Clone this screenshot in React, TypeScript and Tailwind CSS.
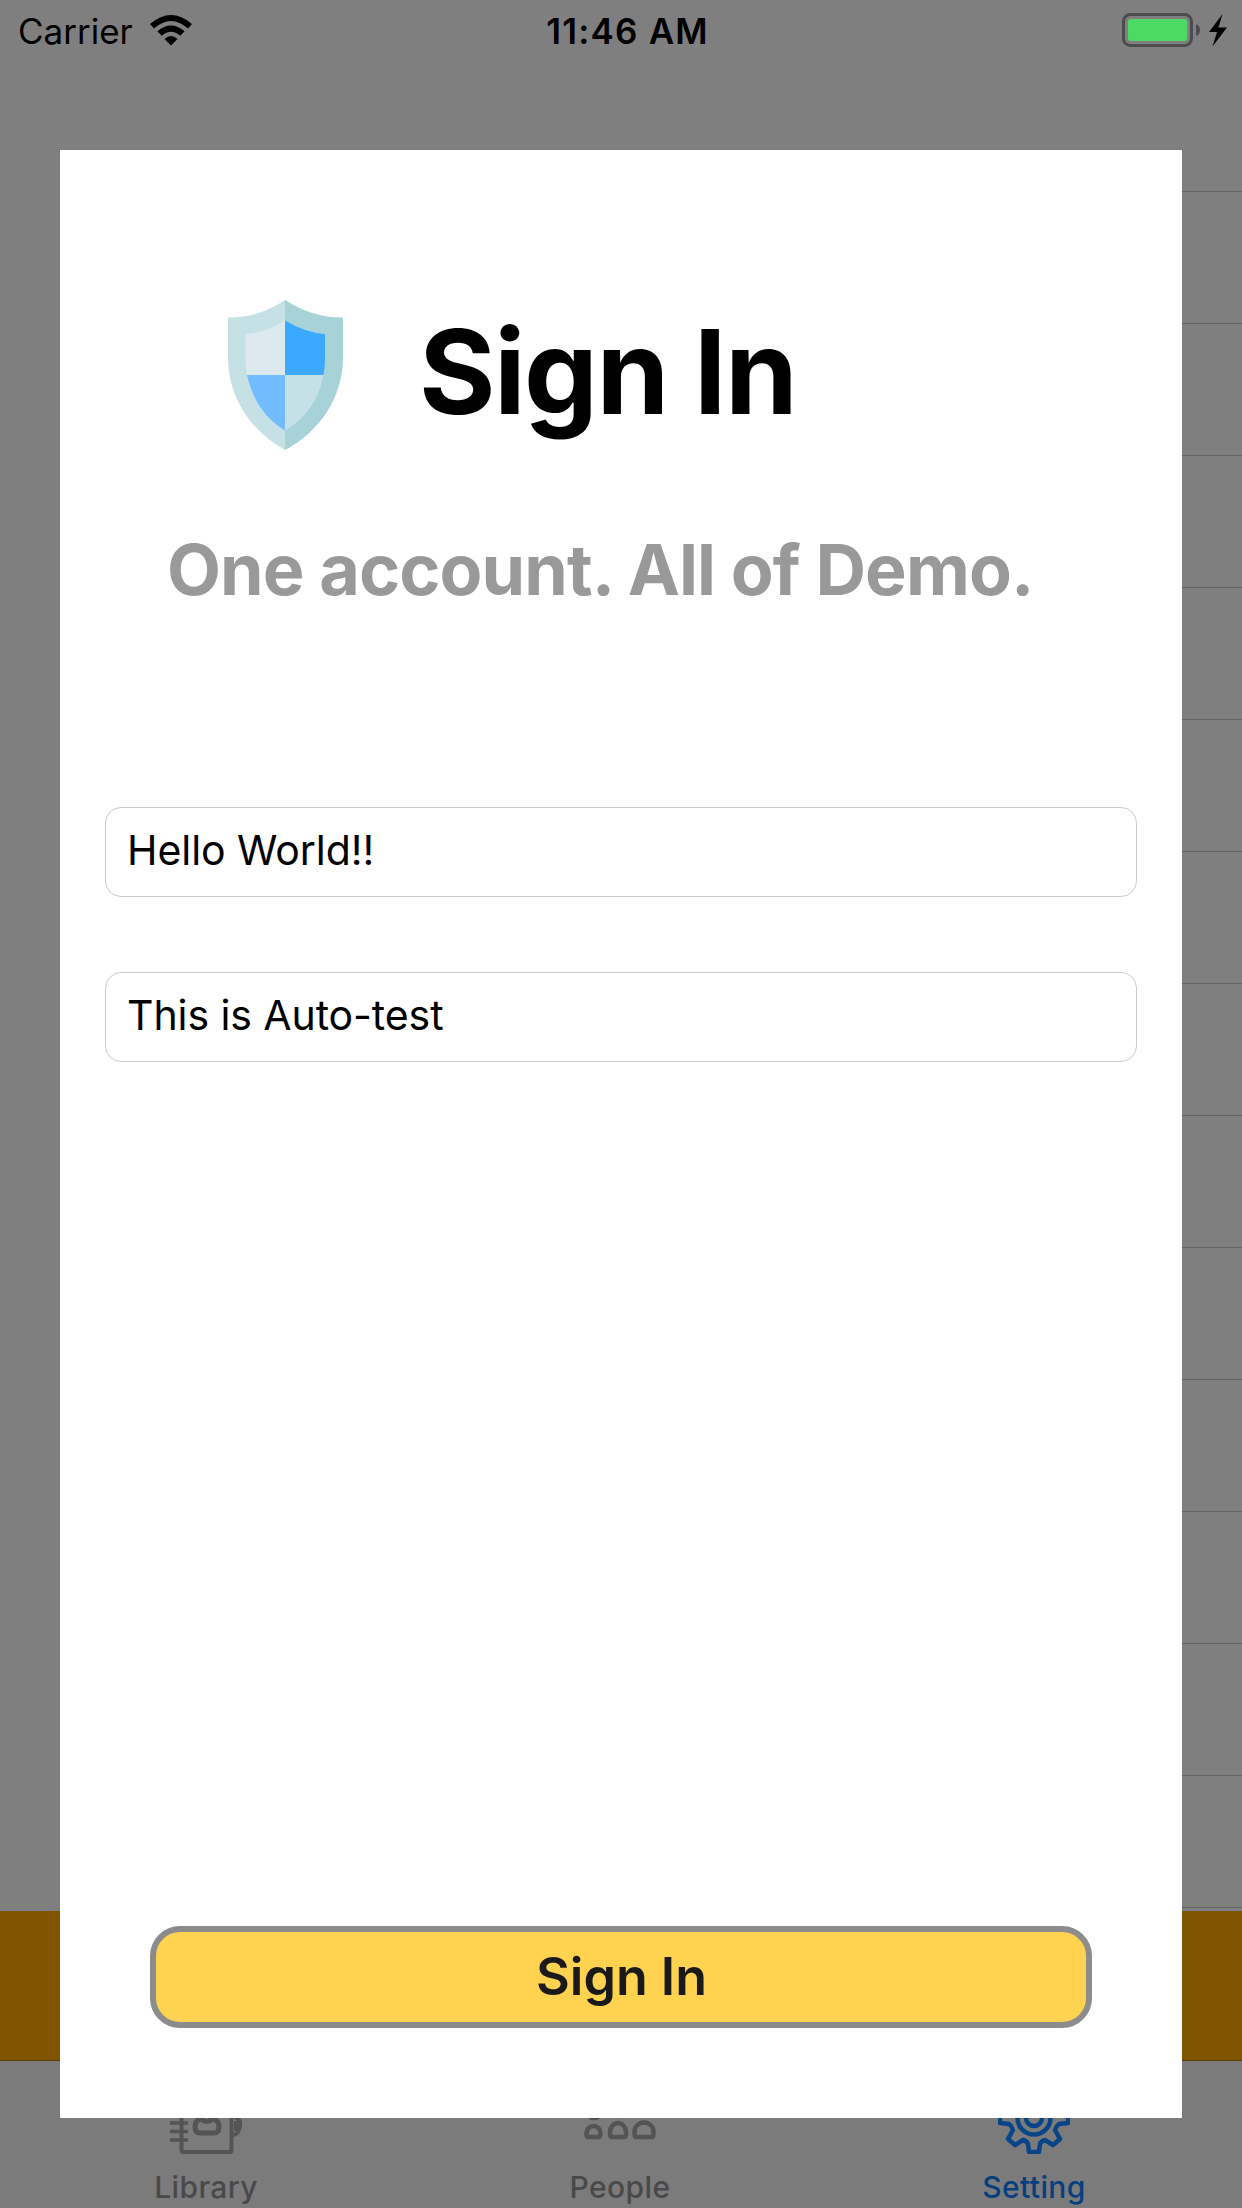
import React from "react";

const rows = Array.from({ length: 14 }, (_, i) => i);

function Wifi() {
  return (
    <svg className="ml-[17px] mt-[15px] h-[31px] w-[42px]" viewBox="0 0 42 31">
      <path d="M0 9Q21 -9 42 9L38 13.5Q21 -1.5 4 13.5Z" />
      <path d="M7.3 16.3Q21 4.5 34.7 16.3L30.2 20.8Q21 12.5 11.8 20.8Z" />
      <path d="M14.5 24Q21 18 27.500 24L21 30.500Z" />
    </svg>
  );
}

function Battery() {
  return (
    <svg className="h-[34px] w-[106px]" viewBox="0 0 106 34">
      <rect x="1.5" y="1.500" width="68" height="31" rx="7" fill="none" stroke="#4c4c4c" strokeWidth="3" />
      <rect x="6" y="6" width="59.300" height="22" rx="3" fill="#4cd964" />
      <path d="M74 11q4 1.500 4 6t-4 6z" fill="#4c4c4c" />
      <path d="M100.500 1L87 19h8l-4.500 14.500L105 14.500h-8.500z" />
    </svg>
  );
}

function Shield() {
  return (
    <svg className="mt-[150px] ml-[168px] h-[150px] w-[115px] shrink-0" viewBox="0 0 115 150">
      <path d="M57 0Q30 18 0 17.500V57C0 96 22 131 57 150Z" fill="#c6e1e5" />
      <path d="M57 0Q85 18 115 17.500V57C115 96 93 131 57 150Z" fill="#a6d2d8" />
      <path d="M57 20.500Q39 32 17.500 34.300V58Q17.500 67 19 75H57Z" fill="#dceaf0" />
      <path d="M57 20.500Q76 32 97 34.300V58Q97 67 95.500 75H57Z" fill="#3ba9ff" />
      <path d="M19 75C25 101 37 118 57 130.500V75Z" fill="#73bbff" />
      <path d="M95.500 75C90 101 78 118 57 130.500V75Z" fill="#c6e1e5" />
    </svg>
  );
}

function LibraryIcon() {
  return (
    <svg className="h-[72px] w-[72px]" viewBox="0 0 72 72" fill="none" stroke="#545454" strokeWidth="4">
      <path d="M11.500 4q0-2 2-2h46q2 0 2 2v64q0 2-2 2h-46q-2 0-2-2z" />
      <path d="M0 14h18M0 23h18M0 32h18M0 41h18M0 49.500h18M0 58h18" strokeWidth="3.500" />
      <path d="M31 37q6 5 12 0 6 1 6 8 0 6-5 6H30q-5 0-5-6 0-7 6-8z" strokeWidth="5" />
      <path d="M62 32l7 6q2 2 1 6l-2 6q-2 3-6 3M66 39v10" />
    </svg>
  );
}

function PeopleIcon() {
  return (
    <svg className="h-[72px] w-[72px]" viewBox="0 0 72 72" fill="none" stroke="#545454" strokeWidth="4.500">
      <circle cx="10" cy="28" r="8" />
      <circle cx="34" cy="26" r="8" />
      <circle cx="60" cy="25" r="8" />
      <path d="M2.500 52v-1a7 7 0 0 1 14 0v1q0 3-2 3h-10q-2 0-2-3zM26 52v-2a8 9 0 0 1 16 0v2q0 3-2 3H28q-2 0-2-3zM50.500 52v-2a9.500 9.500 0 0 1 19 0v2q0 3-2 3h-15q-2 0-2-3z" />
    </svg>
  );
}

function GearIcon() {
  return (
    <svg className="h-[72px] w-[72px]" viewBox="0 0 72 72" fill="none" stroke="#084588" strokeWidth="4.500" strokeLinejoin="round">
      <path d="M31 2H41L42.500 11Q45 13 48 14L55 8L63 16L57 24Q59 27 60 30L70 31V41L61 42Q58 44 57 48L62 57L55 63L47 58Q43 59 42 62L41 70H31L30 62Q29 59 25 58L17 63L10 57L15 48Q14 44 11 42L2 41V31L12 30Q13 27 15 24L9 16L17 8L24 14Q27 13 29.500 11Z" />
      <circle cx="36" cy="36" r="16.500" />
      <circle cx="36" cy="36" r="8" />
    </svg>
  );
}

function Tab({ icon, label, className }: { icon: React.ReactNode; label: string; className: string }) {
  return (
    <div className={`flex flex-1 flex-col items-center pr-[2px] pt-[21px] text-[30px] font-medium leading-[36px] ${className}`}>
      {icon}
      <span className="mt-[15px] tracking-[0.4px]">{label}</span>
    </div>
  );
}

export default function App() {
  return (
    <div className="relative h-[2208px] w-[1242px] overflow-hidden bg-[#7f7f7f] font-['Inter',sans-serif] text-black">
      <div className="flex h-full flex-col">
        <header className="flex h-[60px] shrink-0">
          <div className="flex w-[414px]">
            <span className="ml-[18px] mt-[10px] text-[35px] leading-[42px]">Carrier</span>
            <Wifi />
          </div>
          <div className="mt-[10px] w-[427px] text-center text-[35px] font-semibold leading-[42px] tracking-[1.2px]">11:46 AM</div>
          <div className="ml-auto mr-[14px] mt-[13px]"><Battery /></div>
        </header>
        {rows.map((row) => (
          <div key={row} className="ml-[60px] h-[132px] shrink-0 border-b border-[#646464]" />
        ))}
        <div className="mt-[3px] h-[150px] shrink-0 border-b border-[#593b00] bg-[#7f5500]" />
        <nav className="flex h-[147px] shrink-0 bg-[#7b7b7b]">
          <Tab icon={<LibraryIcon />} label="Library" className="text-[#494949]" />
          <Tab icon={<PeopleIcon />} label="People" className="text-[#494949]" />
          <Tab icon={<GearIcon />} label="Setting" className="text-[#063f80]" />
        </nav>
      </div>

      <main className="absolute left-[60px] top-[150px] flex h-[1968px] w-[1122px] flex-col bg-white">
        <div className="flex">
          <Shield />
          <h1 className="ml-[76px] mt-[149px] whitespace-nowrap text-[117px] font-bold leading-[146px] tracking-[-1.6px]">Sign In</h1>
        </div>
        <p className="ml-[107px] mt-[78px] whitespace-nowrap text-[70px] font-bold leading-[84px] tracking-[-0.9px] text-[#999999]">One account. All of Demo.</p>
        <input aria-label="Account" defaultValue="Hello World!!" className="ml-[45px] mt-[195px] h-[90px] w-[1032px] rounded-[16px] border border-[#cccccc] bg-white px-[21px] pb-[4px] text-[41px] tracking-[-0.05px] outline-none" />
        <input aria-label="Password" defaultValue="This is Auto-test" className="ml-[45px] mt-[75px] h-[90px] w-[1032px] rounded-[16px] border border-[#cccccc] bg-white px-[21px] pb-[4px] text-[41px] tracking-[-0.08px] outline-none" />
        <button className="mb-[90px] ml-[90px] mt-auto h-[102px] w-[942px] rounded-[30px] border-[6px] border-[#8c8c8c] bg-[#ffd250] pl-[1px] text-[52px] font-semibold leading-[60px] text-[#1a1a1a]">Sign In</button>
      </main>
    </div>
  );
}
